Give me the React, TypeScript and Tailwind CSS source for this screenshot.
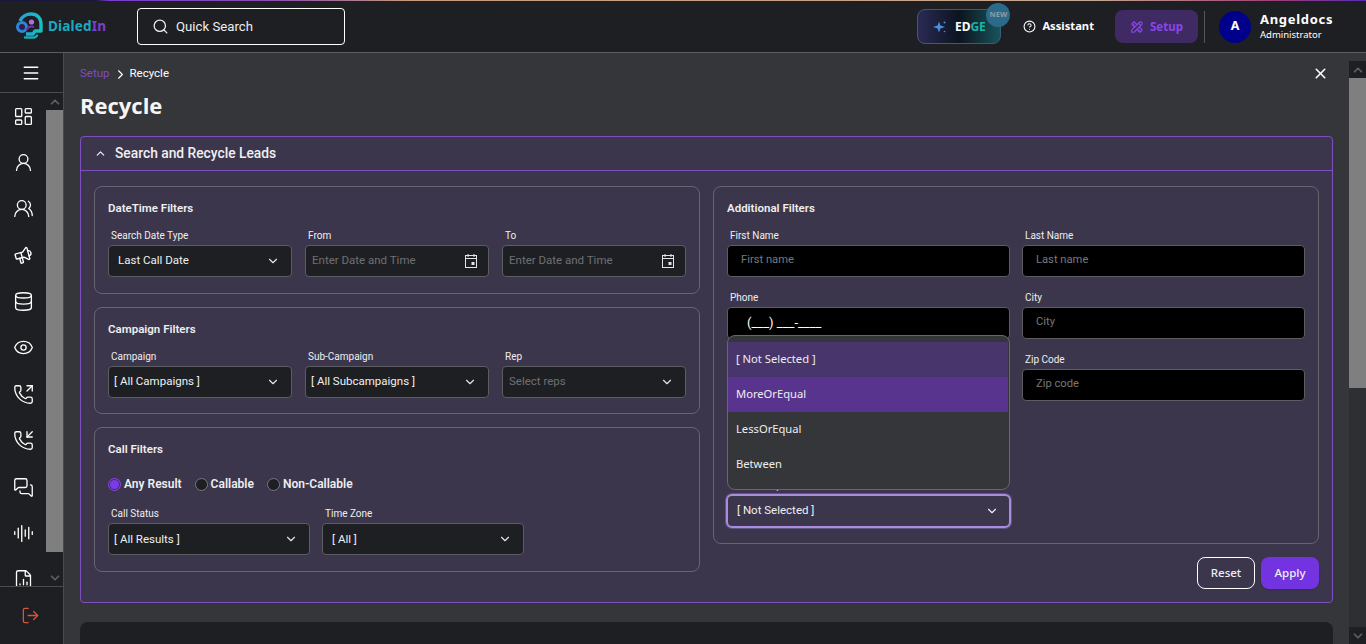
import type { ReactNode } from "react"
import {
  AudioLines,
  ChevronDown,
  ChevronRight,
  ChevronUp,
  CircleHelp,
  Database,
  Eye,
  FileChartColumn,
  LayoutDashboard,
  LogOut,
  Menu,
  MessagesSquare,
  PhoneIncoming,
  PhoneOutgoing,
  Search,
  UserRound,
  UsersRound,
  X,
} from "lucide-react"
import { TbSpeakerphone, TbTools } from "react-icons/tb"

const roboto = "font-['Roboto',sans-serif]"
const noto = "font-['Noto_Sans',sans-serif]"

const topIcons = [LayoutDashboard, UserRound, UsersRound]
const bottomIcons = [
  Database,
  Eye,
  PhoneOutgoing,
  PhoneIncoming,
  MessagesSquare,
  AudioLines,
  FileChartColumn,
]

function CalendarIcon() {
  return (
    <svg width="12" height="14" viewBox="0 0 12 14" fill="none" stroke="#e5e5e5" strokeWidth="1">
      <rect x="0.5" y="1.5" width="11" height="12" />
      <path d="M0.5 4.5h11M3 0v3M9 0v3" />
      <rect x="6.5" y="8" width="3" height="3" fill="#e5e5e5" stroke="none" />
    </svg>
  )
}

function Logo() {
  return (
    <div className="flex w-[89px] items-center">
      <svg width="31" height="28" viewBox="2 0 31 28" fill="none" className="shrink-0">
        <defs>
          <linearGradient id="head" x1="0" y1="0" x2="1" y2="0">
            <stop offset="0" stopColor="#2b9fd8" />
            <stop offset="1" stopColor="#17c0c0" />
          </linearGradient>
        </defs>
        <path d="M6 9C8 4 13 2 17 2c6 0 10 4 10 10v7h-6l-2 3h-7" stroke="url(#head)" strokeWidth="3.4" strokeLinejoin="round" />
        <path d="M11 25.5h9q2 0 3-2" stroke="#1aa9b8" strokeWidth="2.4" strokeLinecap="round" />
        <circle cx="8" cy="15" r="4.5" fill="#2a1f4a" stroke="#2f86d8" strokeWidth="3" />
        <circle cx="17.5" cy="10" r="2.6" fill="#b56ce0" />
        <path d="M12 18q3-5 8-3" stroke="#6a35b0" strokeWidth="2" />
      </svg>
      <span className={`ml-[1px] text-[13.5px] font-bold tracking-[0.2px] text-[#1ba9c0] ${noto}`}>
        Dialed<span className="text-[#7d3fd0]">In</span>
      </span>
    </div>
  )
}

function Header() {
  return (
    <header className="relative flex h-[53px] shrink-0 items-center border-b border-[#5c5d60] bg-[#1e1f22] pl-4 pr-[32px]">
      <div className="absolute left-0 right-0 top-0 h-[1px] bg-[linear-gradient(90deg,#1a1640_0%,#1a1640_7%,#7a3bd0_8%,#8a4fb0_20%,#c89a7c_30%,#c8a890_80%,#a0407a_93%,#5a2bb0_100%)]" />
      <Logo />
      <div className={`ml-[32px] flex h-[37px] w-[208px] items-center rounded border border-white pl-[14px] text-[13.2px] text-[#eeeeee] ${roboto}`}>
        <Search size={17} strokeWidth={1.8} className="mr-[7px]" />
        <span className="pt-[1px]">Quick Search</span>
      </div>
      <div className={`ml-auto flex items-center pt-[1px] ${noto}`}>
        <div className="relative flex h-[35px] w-[84px] items-center justify-center rounded-lg border border-[#3f5a78] bg-gradient-to-r from-[#2a2a55] via-[#0c1420] to-[#15555a] text-[12px] font-bold text-white">
          <svg width="14" height="14" viewBox="0 0 14 14" fill="#4a90e0" className="mr-[8px]">
            <path d="M6 1.5 7.4 5.6 12 7 7.4 8.4 6 12.5 4.6 8.4 0 7l4.6-1.4Z" />
            <circle cx="11.5" cy="2.5" r="1" />
            <circle cx="11.5" cy="11.5" r="0.8" />
          </svg>
          <span>
            ED<span className="text-[#19b5a8]">GE</span>
          </span>
          <span className="absolute right-[-10px] top-[-7px] flex h-[24px] w-[24px] items-center justify-center rounded-full bg-[#2c6a8a] text-[7.5px] text-[#8f9aa5]">
            NEW
          </span>
        </div>
        <div className="ml-[22px] flex items-center text-[11.2px] font-bold text-white">
          <CircleHelp size={13} className="mr-[6px]" />
          Assistant
        </div>
        <div className="ml-[21px] flex h-[33px] w-[83px] items-center justify-center rounded-lg bg-[#3f2a63] text-[11.5px] font-bold text-[#8a45ec]">
          <TbTools size={14} className="mr-[6px]" />
          Setup
        </div>
        <div className="ml-[6px] h-[32px] w-[1px] bg-[#55565a]" />
        <div className="ml-[14px] flex h-[32px] w-[32px] items-center justify-center rounded-full bg-[#00008b] text-[12.5px] font-bold text-white">
          A
        </div>
        <div className="ml-[9px] w-[74px] text-white">
          <div className="-mt-[1px] mb-[1px] text-[13px] font-bold leading-[15px] tracking-[0.7px]">Angeldocs</div>
          <div className="text-[9.5px] leading-[13px]">Administrator</div>
        </div>
      </div>
    </header>
  )
}

function Sidebar() {
  return (
    <aside className="flex h-full w-[64px] shrink-0 flex-col border-r border-[#4a4b4e] bg-[#1e1f22]">
      <div className="flex h-[40px] shrink-0 items-center justify-center border-b border-[#4a4b4e] pr-[1px] text-white">
        <Menu size={20} strokeWidth={1.8} />
      </div>
      <div className="flex h-[493px] shrink-0 overflow-hidden">
        <div className="flex w-[46px] flex-col items-center gap-[25.4px] pt-[12.5px] text-white">
          {topIcons.map((Icon, i) => (
            <Icon key={i} size={21} strokeWidth={1.5} className="shrink-0" />
          ))}
          <TbSpeakerphone size={21} strokeWidth={1.6} className="shrink-0 -rotate-[15deg]" />
          {bottomIcons.map((Icon, i) => (
            <Icon key={i} size={21} strokeWidth={1.5} className="shrink-0" />
          ))}
        </div>
        <div className="flex w-[17px] flex-col">
          <div className="flex h-[17px] items-center justify-center text-[#5f6063]">
            <ChevronUp size={14} strokeWidth={3} />
          </div>
          <div className="h-[442px] bg-[#7f7f7f]" />
          <div className="mt-auto flex h-[17px] items-center justify-center text-[#5f6063]">
            <ChevronDown size={14} strokeWidth={3} />
          </div>
        </div>
      </div>
      <div className="flex flex-1 items-center justify-center border-t border-[#4a4b4e] pr-[3px] text-[#d9543f]">
        <LogOut size={19} strokeWidth={1.6} />
      </div>
    </aside>
  )
}

function Label({ children }: { children: ReactNode }) {
  return <div className="mb-[3px] h-[13px] pl-[3px] text-[10px] leading-[13px] text-[#eeeeee]">{children}</div>
}

function SelectBox({
  value,
  placeholder,
  label,
  pad,
}: {
  value?: string
  placeholder?: string
  label: string
  pad: string
}) {
  return (
    <div>
      <Label>{label}</Label>
      <div className={`flex h-[32px] items-center justify-between rounded border border-[#5c5d60] bg-[#1e1f22] pr-[11px] text-[11.5px] ${pad}`}>
        {value ? <span className="text-[#f0f0f0]">{value}</span> : <span className="text-[#6f7074]">{placeholder}</span>}
        <ChevronDown size={14} className="text-[#e5e5e5]" />
      </div>
    </div>
  )
}

function DateBox({ label }: { label: string }) {
  return (
    <div>
      <Label>{label}</Label>
      <div className="flex h-[32px] items-center justify-between rounded border border-[#5c5d60] bg-[#1e1f22] pl-[6px] pr-[11px] text-[11.5px] text-[#6f7074]">
        Enter Date and Time
        <CalendarIcon />
      </div>
    </div>
  )
}

function TextBox({ label, placeholder }: { label: string; placeholder: string }) {
  return (
    <div>
      <Label>{label}</Label>
      <div className="flex h-[32px] items-center rounded border border-[#5c5d60] bg-black pb-[2px] pl-[13px] text-[11.2px] text-[#77787c]">
        {placeholder}
      </div>
    </div>
  )
}

function Radio({ label, checked }: { label: string; checked?: boolean }) {
  return (
    <div className="flex items-center text-[12px] font-semibold text-[#eeeeee]">
      <span
        className={`mr-[3px] flex h-[13px] w-[13px] items-center justify-center rounded-full border ${
          checked ? "border-[#8a45ec]" : "border-[#77787c] bg-[#1e1f22]"
        }`}
      >
        {checked && <span className="h-[9px] w-[9px] rounded-full bg-[#7c3aed]" />}
      </span>
      {label}
    </div>
  )
}

function Card({ title, children, className }: { title: string; children: ReactNode; className: string }) {
  return (
    <section className={`rounded-lg border border-[#67656f] px-[13px] ${className}`}>
      <h3 className="mb-[14px] mt-[14px] h-[14px] text-[11.5px] font-semibold leading-[14px] text-[#eeeeee]">{title}</h3>
      {children}
    </section>
  )
}

function StatusDropdown() {
  const options = ["[ Not Selected ]", "MoreOrEqual", "LessOrEqual", "Between"]
  return (
    <div className={`absolute left-0 right-0 top-[-144px] z-10 h-[155px] rounded-lg border border-[#67686c] bg-[#35363a] py-[6px] pr-[1px] text-[11.2px] text-[#eeeeee] ${noto}`}>
      {options.map((o, i) => (
        <div
          key={o}
          className={`flex h-[35px] items-center pl-[8px] ${i === 0 ? "bg-[#48356b]" : i === 1 ? "bg-[#59348f]" : ""}`}
        >
          {o}
        </div>
      ))}
    </div>
  )
}

function Panel() {
  return (
    <div className={`rounded border border-[#7d4fc1] bg-[#3b364c] ${roboto}`}>
      <div className="flex h-[34px] items-center border-b border-[#7d4fc1] pl-[13px] text-[13.8px] font-medium text-[#f0f0f0]">
        <ChevronUp size={13} strokeWidth={2.2} className="mr-[8px]" />
        Search and Recycle Leads
      </div>
      <div className="grid grid-cols-2 gap-x-[13px] px-[13px] pb-[13px] pt-[15px]">
        <div className="flex flex-col gap-[13px]">
          <Card title="DateTime Filters" className="h-[107.6px]">
            <div className="grid grid-cols-3 gap-[13px]">
              <SelectBox label="Search Date Type" value="Last Call Date" pad="pl-[9px]" />
              <DateBox label="From" />
              <DateBox label="To" />
            </div>
          </Card>
          <Card title="Campaign Filters" className="h-[107.6px]">
            <div className="grid grid-cols-3 gap-[13px]">
              <SelectBox label="Campaign" value="[ All Campaigns ]" pad="pl-[5px]" />
              <SelectBox label="Sub-Campaign" value="[ All Subcampaigns ]" pad="pl-[5px]" />
              <SelectBox label="Rep" placeholder="Select reps" pad="pl-[6px]" />
            </div>
          </Card>
          <Card title="Call Filters" className="h-[145px]">
            <div className="mb-[16px] mt-[21px] flex h-[14px] items-center gap-[13px]">
              <Radio label="Any Result" checked />
              <Radio label="Callable" />
              <Radio label="Non-Callable" />
            </div>
            <div className="grid w-[416px] grid-cols-2 gap-[12px]">
              <SelectBox label="Call Status" value="[ All Results ]" pad="pl-[5px]" />
              <SelectBox label="Time Zone" value="[ All ]" pad="pl-[9px]" />
            </div>
          </Card>
        </div>
        <div>
          <Card title="Additional Filters" className="h-[358px]">
            <div className="grid grid-cols-2 gap-x-[12px] gap-y-[14px]">
              <TextBox label="First Name" placeholder="First name" />
              <TextBox label="Last Name" placeholder="Last name" />
              <div>
                <Label>Phone</Label>
                <div className="flex h-[32px] items-center rounded border border-[#5c5d60] bg-black pl-[19px] text-[13px] text-white">
                  (___) ___-____
                </div>
              </div>
              <TextBox label="City" placeholder="City" />
              <div className="h-[48px]" />
              <TextBox label="Zip Code" placeholder="Zip code" />
            </div>
            <div className="relative mt-[78px] w-[283px]">
              <StatusDropdown />
              <div className="mb-[2px] h-[13px] pl-[3px] text-[10px] leading-[13px] text-[#eeeeee]">Call Attempts</div>
              <div className="-ml-[1px] flex h-[34px] w-[285px] items-center justify-between rounded-md border-2 border-[#a98ce0] pl-[9px] pr-[10px] text-[11.5px] text-[#f0f0f0] shadow-[0_0_0_1px_rgba(169,140,224,0.35)]">
                [ Not Selected ]
                <ChevronDown size={14} />
              </div>
            </div>
          </Card>
          <div className={`mt-[13px] flex justify-end gap-[6px] text-[11.5px] font-medium text-[#eeeeee] ${noto}`}>
            <button className="h-[32px] w-[58px] rounded-lg border border-white">Reset</button>
            <button className="h-[32px] w-[58px] rounded-lg bg-[#7333e0] shadow">Apply</button>
          </div>
        </div>
      </div>
    </div>
  )
}

export default function App() {
  return (
    <div className="flex h-screen w-full flex-col overflow-hidden bg-[#35363a]">
      <Header />
      <div className="flex min-h-0 flex-1">
        <Sidebar />
        <main className="min-w-0 flex-1 overflow-hidden pl-4 pr-4">
          <div className={`mt-[13px] flex h-[16px] items-center justify-between ${roboto}`}>
            <div className="flex items-center text-[11.5px] text-white">
              <span className="text-[#7e4bc8]">Setup</span>
              <ChevronRight size={15} strokeWidth={1.8} className="ml-[3px] mr-[2px]" />
              <span>Recycle</span>
            </div>
            <X size={17} strokeWidth={2.2} className="mb-[2px] mr-[4px] text-white" />
          </div>
          <h1 className="mb-[15px] mt-[7px] h-[32px] text-[22px] font-bold leading-[32px] text-[#f5f5f5] font-['Open_Sans',sans-serif]">Recycle</h1>
          <Panel />
          <div className="mt-[19px] h-[40px] rounded-t-lg bg-[#1e1f22]" />
        </main>
        <div className="mt-[8px] flex w-[17px] shrink-0 flex-col bg-[#2e2f32]">
          <div className="flex h-[17px] items-center justify-center bg-[#1e1f22] text-[#5f6063]">
            <ChevronUp size={14} strokeWidth={3} />
          </div>
          <div className="h-[310px] bg-[#7f7f7f]" />
          <div className="mt-auto flex h-[17px] items-center justify-center bg-[#1e1f22] text-[#5f6063]">
            <ChevronDown size={14} strokeWidth={3} />
          </div>
        </div>
      </div>
    </div>
  )
}
